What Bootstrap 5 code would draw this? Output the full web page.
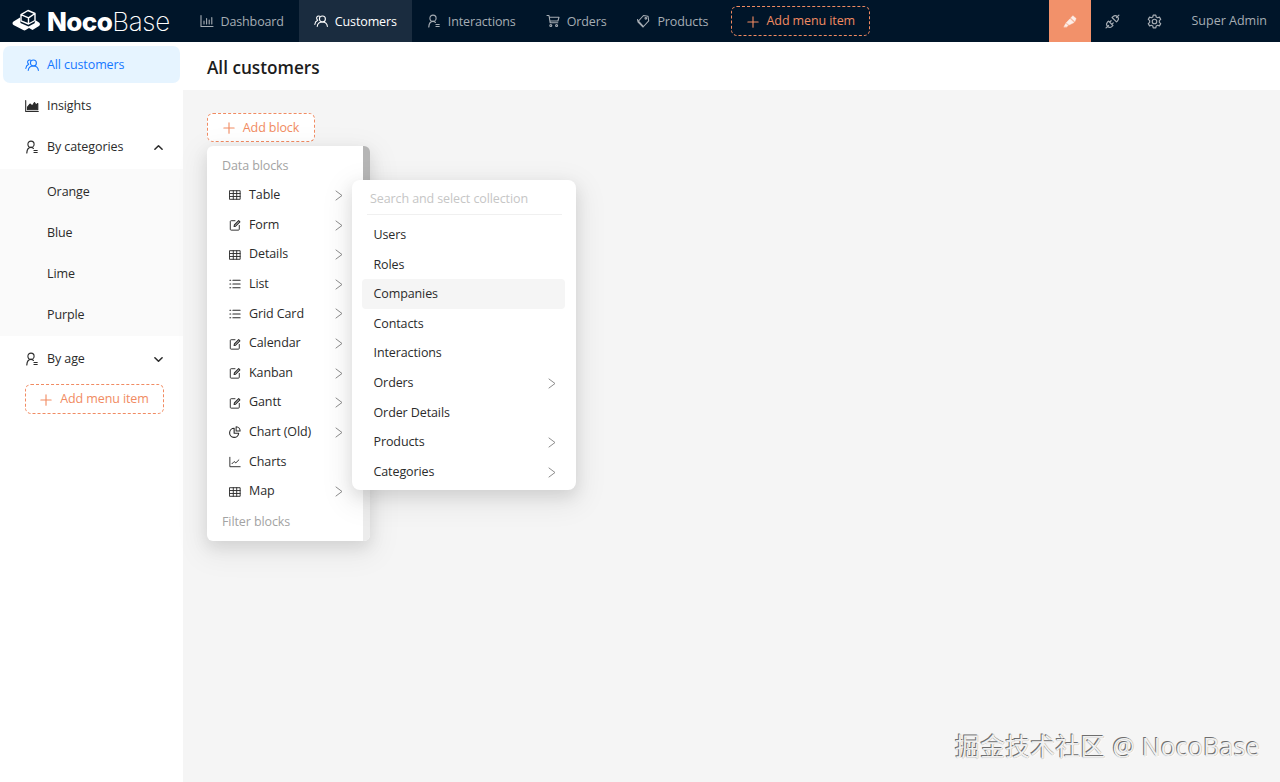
<!DOCTYPE html>
<html lang="en">
<head>
<meta charset="utf-8">
<title>NocoBase</title>
<link rel="stylesheet" href="https://cdn.jsdelivr.net/npm/bootstrap@5.3.0/dist/css/bootstrap.min.css">
<style>
html,body{height:100%;overflow:hidden}
body{font-family:"Open Sans","Noto Sans CJK SC",sans-serif;font-size:12.5px;letter-spacing:-.1px;color:#2b2b2b;background:#f5f5f5}
.ic{width:14px;height:14px;flex:none;fill:none;stroke:currentColor;stroke-width:1.1;stroke-linecap:round;stroke-linejoin:round}
.topbar{height:42px;background:#001529;flex:none;--bs-navbar-padding-y:0;--bs-navbar-padding-x:0}
.brand{width:184.5px;height:42px;padding-left:12px;color:#fff;gap:0}
.brand svg{width:29px;height:26px;margin-right:6px;flex:none}
.brand b{font-family:Inter,sans-serif;font-weight:800;font-size:26px;letter-spacing:-.6px}
.brand i{font-family:Inter,sans-serif;font-style:normal;font-weight:200;font-size:26px;letter-spacing:-.3px}
.topnav{height:42px}
.topnav .nav-link{height:42px;padding:2px 15px 0;gap:7px;color:#a6adb4;font-size:12.5px;letter-spacing:-.13px}
.topnav .nav-link .ic{margin-top:-3px}
.topnav .nav-link.active{background:#1a2c3f;color:#fff}
.dash-btn{--bs-btn-font-size:12.5px;--bs-btn-color:#f18b62;--bs-btn-hover-color:#f18b62;--bs-btn-border-color:#f18b62;--bs-btn-border-width:1px;--bs-btn-border-radius:6px;border-style:dashed;display:inline-flex;align-items:center;justify-content:center;gap:8px;padding:1px 0 0;height:30px}
.dash-btn .ic{width:12px;height:12px;stroke-width:1.3}
.top-add{width:139px;margin-left:8px}
.theme-btn{width:42px;height:42px;background:#f2916a;color:#fff;margin-left:auto;margin-right:1px}
.theme-btn .ic{opacity:.85}
.tool-btn{width:42px;height:42px;color:#a6adb4}
.tool-btn .ic{width:15px;height:15px}
.who{color:#a6adb4;margin:0 13px 0 16px;letter-spacing:0}
.side{width:183px;flex:none;background:#fff;padding-top:4px}
.side-item{height:37px;margin:0 3px 4px;padding:1px 0 0 22px;gap:8px;border-radius:7px;color:#2b2b2b}
.side-item.on{background:#e6f4ff;color:#1677ff}
.side-item .car{width:9px;height:9px;margin-left:auto;margin-right:17px;stroke-width:1.7}
.side-sub{background:#fafafa;height:167px;padding-top:2px;margin-bottom:4px}
.side-sub .side-item{margin:0;height:41px;padding-left:47px;border-radius:0;background:transparent}
.side-add{width:139px;margin:3px 0 0 25px;background:#fff}
.pagehead{height:48px;background:#fff;padding:3px 0 0 24px;font-size:17.2px;font-weight:600;letter-spacing:0;color:#1c1c1c}
.page{padding:23px 0 0 24px}
.add-wrap{width:108px;height:29px}
.add-block{width:108px;height:29px;background:#fff}
.menu-a{--bs-dropdown-min-width:0;--bs-dropdown-border-width:0;--bs-dropdown-border-radius:6px;--bs-dropdown-font-size:12.5px;width:163px;height:395px;top:33px;left:0;padding:5px 0 0;box-shadow:0 6px 16px rgba(0,0,0,.1),0 9px 28px 8px rgba(0,0,0,.05);overflow:hidden}
.menu-a::after{content:"";position:absolute;right:0;top:0;bottom:0;width:7px;background:#ececec}
.menu-a::before{content:"";position:absolute;right:0;top:0;height:40px;width:7px;background:#b5b5b5;z-index:1}
.menu-head{height:29.64px;display:flex;align-items:center;font-size:12.5px;color:#a3a3a3;padding:0 15px}
.menu-a .dropdown-item,.menu-b .dropdown-item{height:29.64px;display:flex;align-items:center;gap:8px;color:#2b2b2b;background:transparent}
.menu-a .dropdown-item{padding:0 27px 0 22px}
.menu-a .dropdown-item .ic{width:12px;height:12px}
.menu-a .dropdown-item .arr,.menu-b .dropdown-item .arr{width:8px;height:11px;margin-left:auto;color:#8c8c8c;stroke-width:1;flex:none}
.menu-b{--bs-dropdown-min-width:0;--bs-dropdown-border-width:0;--bs-dropdown-border-radius:8px;--bs-dropdown-font-size:12.5px;width:224px;height:310px;top:67px;left:145px;padding:4px 0 0;box-shadow:0 6px 16px rgba(0,0,0,.1),0 9px 28px 8px rgba(0,0,0,.06);z-index:1001}
.menu-b .search{height:31px;margin:0 14px 0 15px;padding:0 3px;display:flex;align-items:center;color:#c6c6c6;border-bottom:1px solid #f0f0f0}
.menu-b .dropdown-item{margin:0 11px 0 10px;width:auto;border-radius:4px;padding:1px 9px 0 11.5px}
.menu-b .list-top{padding-top:5px}
.menu-b .dropdown-item.hov{background:#f5f5f5}
.mark-wm{position:absolute;right:20px;bottom:19px;font-size:24.8px;line-height:34px;letter-spacing:.3px;color:#f0f0f0;text-shadow:-1px -1px 0 #6e6e6e,0 0 1px #808080,1px 1px 0 #fff;white-space:nowrap}
</style>
</head>
<body class="d-flex flex-column position-relative">
<svg width="0" height="0" class="position-absolute">
<defs>
<symbol id="i-plus" viewBox="0 0 14 14"><path d="M7 1v12M1 7h12"/></symbol>
<symbol id="i-bar" viewBox="0 0 14 14"><path d="M1 1.500v11h12M4 10V7M6.600 10V4.500M9.200 10V6M11.800 10V3.500"/></symbol>
<symbol id="i-team" viewBox="0 0 14 14"><circle cx="8.400" cy="5" r="3"/><path d="M3.200 12.500c.3-2.800 2.400-4.500 5.200-4.500s4.700 1.600 5 4.500M5.600 2.200C4.400 1.500 2.600 2.400 2.600 4c0 1 .5 1.700 1.100 2.200C2 7 1 8.500.8 10.500"/></symbol>
<symbol id="i-user" viewBox="0 0 14 14"><circle cx="6" cy="4.200" r="3.100"/><path d="M1.800 13c.2-3 1.800-5.600 4.200-5.600 1 0 1.800.4 2.400 1M9 10.500h3.200M9 12.500h3.200" stroke-width="1.200"/></symbol>
<symbol id="i-cart" viewBox="0 0 14 14"><path d="M1 1.500h2l1.200 7.300h7.600M3.300 3.300h9.700l-1.100 3.700H4"/><circle cx="4.800" cy="11.500" r="1"/><circle cx="10.600" cy="11.500" r="1"/></symbol>
<symbol id="i-tag" viewBox="0 0 14 14"><path d="M2.500 7l5-5.500 4.500.7.700 4.600-5.200 5.700zM1.500 5.500l.6 2.500 5 5"/><circle cx="9.800" cy="4.300" r=".8"/></symbol>
<symbol id="i-area" viewBox="0 0 14 14"><path d="M.7 1.500v11h12.600"/><path d="M2.500 10.800V8l2.500-3 2.200 2L9.500 3.500l1.500 2.500 1.800-1.500v6.300z" fill="currentColor"/></symbol>
<symbol id="i-table" viewBox="0 0 14 14"><rect x="1" y="2" width="12" height="10"/><path d="M1 5.300h12M1 8.700h12M5 2v10M9 2v10"/></symbol>
<symbol id="i-form" viewBox="0 0 14 14"><path d="M12 7.500V12a1 1 0 0 1-1 1H2.500a1 1 0 0 1-1-1V3a1 1 0 0 1 1-1H7"/><path d="M6 8.800l.3-1.800 5-5 1.400 1.400-5 5z" stroke-width="1.300"/></symbol>
<symbol id="i-list" viewBox="0 0 14 14"><path d="M4.500 2.500H13M4.500 7H13M4.500 11.500H13M1 2.500h1M1 7h1M1 11.500h1" stroke-width="1.200"/></symbol>
<symbol id="i-pie" viewBox="0 0 14 14"><path d="M6 2.700a5.300 5.300 0 1 0 5.300 5.800H6z" stroke-width="1.300"/><path d="M8.300 1a4.900 4.900 0 0 1 4.700 4.900H8.300z" stroke-width="1.200"/></symbol>
<symbol id="i-line" viewBox="0 0 14 14"><path d="M1 1.500v11h12M3.500 9l2.500-2.500 2 1.500 3.500-3.500"/></symbol>
<symbol id="i-hl" viewBox="0 0 14 14"><path d="M1 12.800l1.700-3.200 2.300 2-1.200 1.200zM3.200 8.800L7 4.800l4 3.700-5 2.500zM7.800 4l2-2.300 3.300 2.800-1.300 3.100z" fill="currentColor" stroke-width=".5"/></symbol>
<symbol id="i-api" viewBox="0 0 14 14"><path d="M1 13l2.300-2.300M13 1l-2.300 2.300M3.300 6.600l4.100 4.100-.9.900a2.900 2.900 0 0 1-4.100-4.100zM10.700 7.400L6.600 3.300l.9-.9a2.900 2.900 0 0 1 4.100 4.100zM5.700 6.300L4.500 7.500M7.700 8.300L6.500 9.500"/></symbol>
<symbol id="i-gear" viewBox="0 0 14 14"><path d="M5.800 1h2.400l.4 1.800 1.300.7 1.700-.6 1.200 2.100-1.300 1.200v1.600l1.300 1.200-1.200 2.100-1.700-.6-1.300.7L8.200 13H5.800l-.4-1.800-1.300-.7-1.700.6L1.200 9l1.300-1.200V6.200L1.200 5l1.200-2.100 1.700.6 1.300-.7z"/><circle cx="7" cy="7" r="2.100"/></symbol>
<symbol id="i-arr" viewBox="0 0 8 11"><path d="M1 1l6 4.500-6 4.500"/></symbol>
<symbol id="i-up" viewBox="0 0 10 10"><path d="M1 7l4-4 4 4"/></symbol>
<symbol id="i-down" viewBox="0 0 10 10"><path d="M1 3l4 4 4-4"/></symbol>
</defs>
</svg>

<nav class="navbar topbar flex-nowrap justify-content-start">
  <div class="brand d-flex align-items-center">
    <svg viewBox="0 0 29 26"><path fill="#fff" d="M1.500 13.500L8 9.500l.5 5.500 8 3.500 6-3.200 1-3 3.500 2.200c1.300.8 1.300 2.800 0 3.600l-6.500 3.900-3.500-2-3.300 2c-.8.500-1.700.5-2.500 0L1.500 17c-1.300-.8-1.300-2.700 0-3.500z"/><path fill="none" stroke="#fff" stroke-width="1.400" stroke-linejoin="round" d="M9 6.700L16 2.500l7 3v7L16.500 16 9 12.800zM9 6.700l7.500 3.200L23 5.500M16.500 9.900V16"/></svg>
    <b>Noco</b><i>Base</i>
  </div>
  <ul class="nav topnav flex-nowrap">
    <li class="nav-item"><a class="nav-link d-flex align-items-center" href="#"><svg class="ic"><use href="#i-bar"/></svg>Dashboard</a></li>
    <li class="nav-item"><a class="nav-link active d-flex align-items-center" href="#"><svg class="ic"><use href="#i-team"/></svg>Customers</a></li>
    <li class="nav-item"><a class="nav-link d-flex align-items-center" href="#"><svg class="ic"><use href="#i-user"/></svg>Interactions</a></li>
    <li class="nav-item"><a class="nav-link d-flex align-items-center" href="#"><svg class="ic"><use href="#i-cart"/></svg>Orders</a></li>
    <li class="nav-item"><a class="nav-link d-flex align-items-center" href="#"><svg class="ic"><use href="#i-tag"/></svg>Products</a></li>
  </ul>
  <a class="btn dash-btn top-add" href="#"><svg class="ic"><use href="#i-plus"/></svg>Add menu item</a>
  <div class="theme-btn d-flex align-items-center justify-content-center"><svg class="ic"><use href="#i-hl"/></svg></div>
  <div class="tool-btn d-flex align-items-center justify-content-center"><svg class="ic"><use href="#i-api"/></svg></div>
  <div class="tool-btn d-flex align-items-center justify-content-center"><svg class="ic"><use href="#i-gear"/></svg></div>
  <span class="who">Super Admin</span>
</nav>

<div class="d-flex flex-grow-1">
  <aside class="side">
    <div class="side-item on d-flex align-items-center"><svg class="ic"><use href="#i-team"/></svg>All customers</div>
    <div class="side-item d-flex align-items-center"><svg class="ic"><use href="#i-area"/></svg>Insights</div>
    <div class="side-item d-flex align-items-center"><svg class="ic"><use href="#i-user"/></svg>By categories<svg class="ic car"><use href="#i-up"/></svg></div>
    <div class="side-sub">
      <div class="side-item d-flex align-items-center">Orange</div>
      <div class="side-item d-flex align-items-center">Blue</div>
      <div class="side-item d-flex align-items-center">Lime</div>
      <div class="side-item d-flex align-items-center">Purple</div>
    </div>
    <div class="side-item d-flex align-items-center"><svg class="ic"><use href="#i-user"/></svg>By age<svg class="ic car"><use href="#i-down"/></svg></div>
    <a class="btn dash-btn side-add" href="#"><svg class="ic"><use href="#i-plus"/></svg>Add menu item</a>
  </aside>
  <main class="flex-grow-1">
    <div class="pagehead d-flex align-items-center">All customers</div>
    <div class="page">
      <div class="add-wrap position-relative">
        <a class="btn dash-btn add-block" href="#"><svg class="ic"><use href="#i-plus"/></svg>Add block</a>
        <div class="dropdown-menu d-block menu-a">
          <h6 class="dropdown-header menu-head m-0 fw-normal">Data blocks</h6>
          <a class="dropdown-item" href="#"><svg class="ic"><use href="#i-table"/></svg>Table<svg class="ic arr"><use href="#i-arr"/></svg></a>
          <a class="dropdown-item" href="#"><svg class="ic"><use href="#i-form"/></svg>Form<svg class="ic arr"><use href="#i-arr"/></svg></a>
          <a class="dropdown-item" href="#"><svg class="ic"><use href="#i-table"/></svg>Details<svg class="ic arr"><use href="#i-arr"/></svg></a>
          <a class="dropdown-item" href="#"><svg class="ic"><use href="#i-list"/></svg>List<svg class="ic arr"><use href="#i-arr"/></svg></a>
          <a class="dropdown-item" href="#"><svg class="ic"><use href="#i-list"/></svg>Grid Card<svg class="ic arr"><use href="#i-arr"/></svg></a>
          <a class="dropdown-item" href="#"><svg class="ic"><use href="#i-form"/></svg>Calendar<svg class="ic arr"><use href="#i-arr"/></svg></a>
          <a class="dropdown-item" href="#"><svg class="ic"><use href="#i-form"/></svg>Kanban<svg class="ic arr"><use href="#i-arr"/></svg></a>
          <a class="dropdown-item" href="#"><svg class="ic"><use href="#i-form"/></svg>Gantt<svg class="ic arr"><use href="#i-arr"/></svg></a>
          <a class="dropdown-item" href="#"><svg class="ic"><use href="#i-pie"/></svg>Chart (Old)<svg class="ic arr"><use href="#i-arr"/></svg></a>
          <a class="dropdown-item" href="#"><svg class="ic"><use href="#i-line"/></svg>Charts</a>
          <a class="dropdown-item" href="#"><svg class="ic"><use href="#i-table"/></svg>Map<svg class="ic arr"><use href="#i-arr"/></svg></a>
          <h6 class="dropdown-header menu-head m-0 fw-normal">Filter blocks</h6>
        </div>
        <div class="dropdown-menu d-block menu-b">
          <div class="search">Search and select collection</div>
          <div class="list-top">
            <a class="dropdown-item" href="#">Users</a>
            <a class="dropdown-item" href="#">Roles</a>
            <a class="dropdown-item hov" href="#">Companies</a>
            <a class="dropdown-item" href="#">Contacts</a>
            <a class="dropdown-item" href="#">Interactions</a>
            <a class="dropdown-item" href="#">Orders<svg class="ic arr"><use href="#i-arr"/></svg></a>
            <a class="dropdown-item" href="#">Order Details</a>
            <a class="dropdown-item" href="#">Products<svg class="ic arr"><use href="#i-arr"/></svg></a>
            <a class="dropdown-item" href="#">Categories<svg class="ic arr"><use href="#i-arr"/></svg></a>
          </div>
        </div>
      </div>
    </div>
  </main>
</div>
<div class="mark-wm">掘金技术社区 @ NocoBase</div>
<script src="https://cdn.jsdelivr.net/npm/bootstrap@5.3.0/dist/js/bootstrap.bundle.min.js"></script>
</body>
</html>
